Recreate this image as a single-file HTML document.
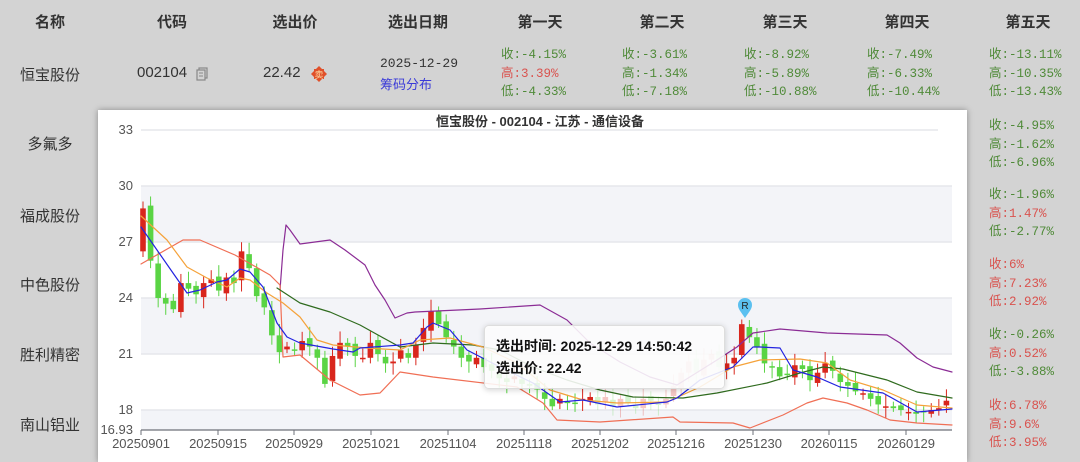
<!DOCTYPE html>
<html><head><meta charset="utf-8"><style>
*{margin:0;padding:0;box-sizing:border-box}
body{width:1080px;height:462px;overflow:hidden;background:#d3d3d3;font-family:"Liberation Sans","Noto Sans CJK SC",sans-serif;position:relative;color:#333}
.a{position:absolute;white-space:nowrap}
.h{font-weight:bold;font-size:15px;color:#333;transform:translateX(-50%);top:11px}
.n{font-size:15px;color:#333;transform:translateX(-50%)}
.m{font-family:"Liberation Mono","Noto Sans CJK SC",monospace;font-size:12.5px;line-height:18.5px}
.g{color:#4f8a38}.r{color:#d9534f}
#box{position:absolute;left:98px;top:110px;width:869px;height:352px;background:#fff;box-shadow:0 0 6px rgba(0,0,0,.35)}
</style></head><body>
<div class="a h" style="left:50px">名称</div>
<div class="a h" style="left:172px">代码</div>
<div class="a h" style="left:295px">选出价</div>
<div class="a h" style="left:418px">选出日期</div>
<div class="a h" style="left:540px">第一天</div>
<div class="a h" style="left:662px">第二天</div>
<div class="a h" style="left:785px">第三天</div>
<div class="a h" style="left:907px">第四天</div>
<div class="a h" style="left:1028px">第五天</div>

<div class="a n" style="left:50px;top:64px">恒宝股份</div>
<div class="a" style="left:137px;top:64px;font-size:15px;color:#333">002104</div>
<svg class="a" style="left:196px;top:67px" width="12" height="14" viewBox="0 0 12 14"><rect x="3" y="1" width="8" height="10" fill="none" stroke="#888" stroke-width="1.2"/><rect x="1" y="3" width="8" height="10" fill="#d3d3d3" stroke="#888" stroke-width="1.2"/><line x1="3" y1="6" x2="7" y2="6" stroke="#888"/><line x1="3" y1="9" x2="7" y2="9" stroke="#888"/></svg>
<div class="a" style="left:263px;top:64px;font-size:15px;color:#333">22.42</div>
<svg class="a" style="left:311px;top:66px" width="16" height="16" viewBox="0 0 16 16"><polygon points="8,0 16,8 8,16 0,8" fill="#e0502a"/><rect x="3" y="3" width="10" height="10" fill="#e0502a"/><text x="8" y="12" font-size="9" text-anchor="middle" fill="#ffd9a0" font-family="Noto Sans CJK SC">卖</text></svg>
<div class="a m" style="left:380px;top:55px;color:#333;font-size:13px">2025-12-29</div>
<div class="a" style="left:380px;top:74px;font-size:13px;color:#3a3ad8">筹码分布</div>

<div class="a m" style="left:501px;top:46px"><span class="g">收:-4.15%</span><br><span class="r">高:3.39%</span><br><span class="g">低:-4.33%</span></div>
<div class="a m" style="left:622px;top:46px"><span class="g">收:-3.61%</span><br><span class="g">高:-1.34%</span><br><span class="g">低:-7.18%</span></div>
<div class="a m" style="left:744px;top:46px"><span class="g">收:-8.92%</span><br><span class="g">高:-5.89%</span><br><span class="g">低:-10.88%</span></div>
<div class="a m" style="left:867px;top:46px"><span class="g">收:-7.49%</span><br><span class="g">高:-6.33%</span><br><span class="g">低:-10.44%</span></div>
<div class="a m" style="left:989px;top:46px"><span class="g">收:-13.11%</span><br><span class="g">高:-10.35%</span><br><span class="g">低:-13.43%</span></div>

<div class="a n" style="left:50px;top:133px">多氟多</div>
<div class="a n" style="left:50px;top:205px">福成股份</div>
<div class="a n" style="left:50px;top:274px">中色股份</div>
<div class="a n" style="left:50px;top:344px">胜利精密</div>
<div class="a n" style="left:50px;top:414px">南山铝业</div>

<div class="a m" style="left:989px;top:117px"><span class="g">收:-4.95%</span><br><span class="g">高:-1.62%</span><br><span class="g">低:-6.96%</span></div>
<div class="a m" style="left:989px;top:186px"><span class="g">收:-1.96%</span><br><span class="r">高:1.47%</span><br><span class="g">低:-2.77%</span></div>
<div class="a m" style="left:989px;top:256px"><span class="r">收:6%</span><br><span class="r">高:7.23%</span><br><span class="r">低:2.92%</span></div>
<div class="a m" style="left:989px;top:326px"><span class="g">收:-0.26%</span><br><span class="r">高:0.52%</span><br><span class="g">低:-3.88%</span></div>
<div class="a m" style="left:989px;top:397px"><span class="r">收:6.78%</span><br><span class="r">高:9.6%</span><br><span class="r">低:3.95%</span></div>

<div id="box"></div>
<svg id="ch" class="a" style="left:0;top:0" width="1080" height="462">
<defs><filter id="sh" x="-10%" y="-20%" width="120%" height="140%"><feDropShadow dx="0" dy="1" stdDeviation="3" flood-opacity="0.2"/></filter></defs>
<rect x="141" y="186" width="811" height="56" fill="#f3f4f8"/>
<rect x="141" y="298" width="811" height="56" fill="#f3f4f8"/>
<rect x="141" y="410" width="811" height="20" fill="#f3f4f8"/>
<g stroke="#e6e7ec" stroke-width="1.5"><line x1="141" y1="130" x2="938" y2="130"/><line x1="141" y1="186" x2="952" y2="186"/><line x1="141" y1="242" x2="952" y2="242"/><line x1="141" y1="298" x2="952" y2="298"/><line x1="141" y1="354" x2="952" y2="354"/><line x1="141" y1="410" x2="952" y2="410"/></g>
<g font-size="13" fill="#555" text-anchor="end" font-family="Liberation Sans"><text x="133" y="134">33</text><text x="133" y="190">30</text><text x="133" y="246">27</text><text x="133" y="302">24</text><text x="133" y="358">21</text><text x="133" y="414">18</text><text x="133" y="434">16.93</text></g>
<text x="540" y="126" font-size="13" font-weight="bold" fill="#333" text-anchor="middle" font-family="Liberation Sans,Noto Sans CJK SC">恒宝股份 - 002104 - 江苏 - 通信设备</text>
<g id="cand"></g>
<g fill="none" stroke-width="1.2" stroke-linejoin="round" stroke-linecap="round">
<polyline stroke="#8b2c95" points="280,290 283,250 286,225 290,230 300,244 330,240 345,250 365,265 375,285 385,300 395,318 407,313 415,312 480,309 540,305 567,320 590,343 620,362 650,377 677,385 717,360 737,347 753,333 760,332 780,329 827,333 887,335 900,343 917,358 933,367 952,372"/>
<polyline stroke="#f06f55" points="141,264 183,240 200,240 235,255 270,275 280,285 283,357 300,355 330,380 360,395 380,393 400,372 433,377 517,387 543,403 557,420 600,422 673,417 680,422 733,423 750,428 783,415 807,403 823,398 847,403 867,410 890,420 917,423 952,425"/>
<polyline stroke="#2f6b1e" points="277,288 300,303 330,312 360,325 378,335 400,347 433,343 473,345 500,350 533,367 567,380 600,390 633,397 683,398 717,393 767,383 800,373 823,367 843,369 887,380 917,392 952,398"/>
<polyline stroke="#f5a23a" points="141,216 167,240 187,267 207,278 227,287 240,278 250,280 267,293 283,303 300,317 317,340 333,345 367,348 400,350 420,340 450,338 483,347 517,363 550,390 583,400 617,403 667,402 700,387 733,367 760,360 800,359 827,363 850,380 883,390 917,405 952,408"/>
<polyline stroke="#2323e0" points="141,227 157,250 173,273 187,293 200,290 217,282 227,280 240,269 250,272 263,287 277,323 287,337 300,343 333,349 353,352 360,348 400,345 413,343 427,327 433,323 450,330 467,350 500,367 533,383 560,402 583,400 617,407 667,402 677,398 700,380 733,367 753,347 760,347 780,348 793,370 817,377 840,387 883,393 917,412 952,409"/>
</g>
<line x1="141" y1="430" x2="952" y2="430" stroke="#6e7079" stroke-width="1.2"/>
<g stroke="#6e7079"><line x1="141" y1="430" x2="141" y2="435"/><line x1="218" y1="430" x2="218" y2="435"/><line x1="294" y1="430" x2="294" y2="435"/><line x1="371" y1="430" x2="371" y2="435"/><line x1="448" y1="430" x2="448" y2="435"/><line x1="524" y1="430" x2="524" y2="435"/><line x1="600" y1="430" x2="600" y2="435"/><line x1="676" y1="430" x2="676" y2="435"/><line x1="753" y1="430" x2="753" y2="435"/><line x1="829" y1="430" x2="829" y2="435"/><line x1="906" y1="430" x2="906" y2="435"/></g>
<g font-size="13" fill="#555" text-anchor="middle" font-family="Liberation Sans"><text x="141" y="448">20250901</text><text x="218" y="448">20250915</text><text x="294" y="448">20250929</text><text x="371" y="448">20251021</text><text x="448" y="448">20251104</text><text x="524" y="448">20251118</text><text x="600" y="448">20251202</text><text x="676" y="448">20251216</text><text x="753" y="448">20251230</text><text x="829" y="448">20260115</text><text x="906" y="448">20260129</text></g>
<path d="M745,318 C741,312 738,309 738,305 A7,7 0 1 1 752,305 C752,309 749,312 745,318Z" fill="#5bc0f0"/>
<text x="745" y="309" font-size="10" text-anchor="middle" fill="#222" font-family="Liberation Sans">R</text>
<rect x="484.5" y="325.5" width="240" height="63" rx="4" fill="rgba(255,255,255,0.86)" stroke="#ddd" filter="url(#sh)"/>
<text x="496" y="351" font-size="14" font-weight="bold" fill="#111" font-family="Liberation Sans,Noto Sans CJK SC">选出时间: 2025-12-29 14:50:42</text>
<text x="496" y="373" font-size="14" font-weight="bold" fill="#111" font-family="Liberation Sans,Noto Sans CJK SC">选出价: 22.42</text>
</svg>
<script>
var c=[26.5,28.8,26,24,23.7,23.4,24.8,24.5,24.2,24.8,25,24.4,25.1,24.8,26.5,25.6,24.1,23.5,22.0,21.1,21.4,21.2,21.7,21.4,20.8,19.4,20.9,21.6,21.4,20.9,20.8,21.6,21.0,20.5,20.6,21.2,20.8,21.5,22.4,23.3,22.6,21.9,21.4,20.8,20.6,20.8,20.3,20.1,19.7,19.5,19.8,19.4,19.3,19.1,18.6,18.2,18.6,18.4,18.4,18.6,18.7,18.3,18.7,18.2,18.6,18.4,18.1,18.6,18.5,18.3,18.6,19.3,20.0,20.6,20.0,20.7,21.0,20.3,20.5,20.8,22.6,21.9,21.4,20.5,20.3,19.8,19.9,20.4,20.2,19.6,20.0,20.5,20.1,19.5,19.3,19.0,18.9,18.6,18.3,18.2,18.1,18.0,17.9,17.8,17.95,18.0,18.1,18.5];
var n=c.length,s="",w=(952-141)/(n-1);
function Y(p){return 130+(33-p)*18.67}
for(var i=1;i<n;i++){var o=c[i-1]+(i%3-1)*0.15,cl=c[i];var up=cl>o;var x=141+(i-1)*w+2;var col=up?"#d9261c":"#5ad444";
var hi=Math.max(o,cl)+0.25+(i%4)*0.12,lo=Math.min(o,cl)-0.2-(i%5)*0.1;
var op=(x>484&&x<725&&i>60)?0.25:1;
s+='<g opacity="'+op+'"><line x1="'+x+'" x2="'+x+'" y1="'+Y(hi)+'" y2="'+Y(lo)+'" stroke="'+col+'"/><rect x="'+(x-2.8)+'" width="5.6" y="'+Y(Math.max(o,cl))+'" height="'+Math.max(1.5,Math.abs(o-cl)*18.67)+'" fill="'+col+'"/></g>';}
document.getElementById("cand").innerHTML=s;
</script>
</body></html>
